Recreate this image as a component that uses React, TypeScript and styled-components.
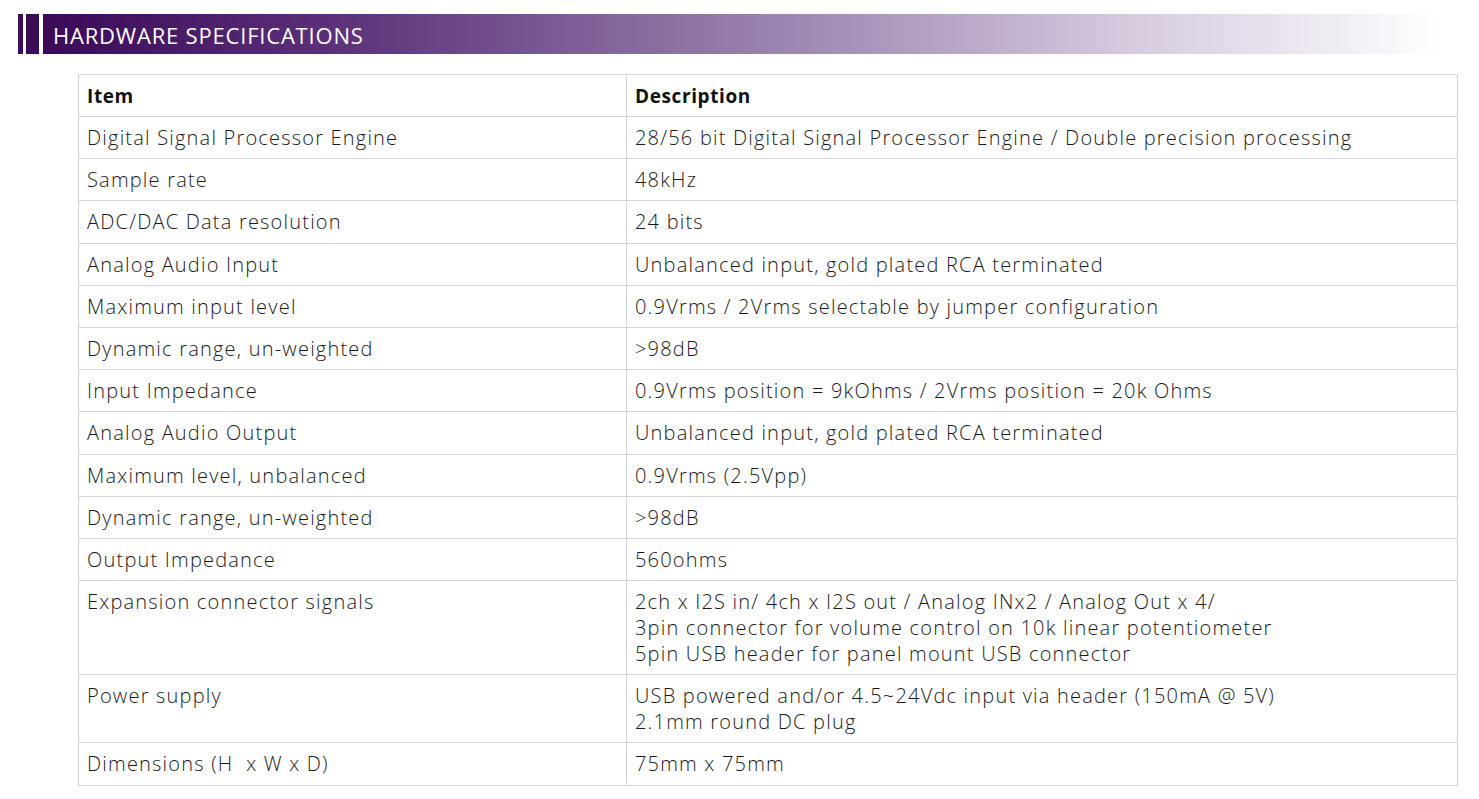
import React from 'react';
import styled, { createGlobalStyle } from 'styled-components';

const GlobalStyle = createGlobalStyle`
  body {
    margin: 0;
    background: #ffffff;
    font-family: "Open Sans", "Liberation Sans", sans-serif;
  }
`;

const Page = styled.div`
  width: 1479px;
  height: 799px;
  padding-top: 14px;
  box-sizing: border-box;
  overflow: hidden;
`;

const Banner = styled.div`
  display: flex;
  align-items: stretch;
  height: 40px;
  margin-left: 18px;
  width: 1422px;
`;

const Stripe = styled.div<{ $w: number; $gap: number }>`
  width: ${p => p.$w}px;
  margin-right: ${p => p.$gap}px;
  background: #3c0c5b;
`;

const Title = styled.div`
  flex: 1;
  display: flex;
  align-items: center;
  padding-left: 10px;
  background: linear-gradient(to right, #3a0a58 0%, #5a2f78 20%, #7d5e95 38%, #ab98bd 60%, #d6cbdf 78%, #efebf3 92%, #ffffff 100%);
  color: #ffffff;
  font-family: "Open Sans", "Liberation Sans", sans-serif;
  font-size: 22px;
  letter-spacing: 0.8px;
  padding-top: 1px;
  box-sizing: border-box;
`;

const Table = styled.table`
  margin: 20px 0 0 78px;
  width: 1380px;
  border-collapse: collapse;
  table-layout: fixed;
`;

const HeadCell = styled.th<{ $w?: number }>`
  width: ${p => (p.$w ? `${p.$w}px` : 'auto')};
  border: 1px solid #d4d4d4;
  padding: 8px 8px 7px 8px;
  height: 26px;
  text-align: left;
  font-weight: bold;
  font-size: 19px;
  letter-spacing: 0.6px;
  color: #111;
  line-height: 26px;
`;

const Cell = styled.td`
  border: 1px solid #d4d4d4;
  padding: 8px 8px 7.2px 8px;
  vertical-align: top;
  font-size: 20px;
  font-weight: 300;
  letter-spacing: 1.2px;
  line-height: 26px;
  color: #1a1a1a;
  white-space: pre-wrap;
`;

const rows: [string, string][] = [
  ['Digital Signal Processor Engine', '28/56 bit Digital Signal Processor Engine / Double precision processing'],
  ['Sample rate', '48kHz'],
  ['ADC/DAC Data resolution', '24 bits'],
  ['Analog Audio Input', 'Unbalanced input, gold plated RCA terminated'],
  ['Maximum input level', '0.9Vrms / 2Vrms selectable by jumper configuration'],
  ['Dynamic range, un-weighted', '>98dB'],
  ['Input Impedance', '0.9Vrms position = 9kOhms / 2Vrms position = 20k Ohms'],
  ['Analog Audio Output', 'Unbalanced input, gold plated RCA terminated'],
  ['Maximum level, unbalanced', '0.9Vrms (2.5Vpp)'],
  ['Dynamic range, un-weighted', '>98dB'],
  ['Output Impedance', '560ohms'],
  [
    'Expansion connector signals',
    '2ch x I2S in/ 4ch x I2S out / Analog INx2 / Analog Out x 4/\n3pin connector for volume control on 10k linear potentiometer\n5pin USB header for panel mount USB connector',
  ],
  ['Power supply', 'USB powered and/or 4.5~24Vdc input via header (150mA @ 5V)\n2.1mm round DC plug'],
  ['Dimensions (H  x W x D)', '75mm x 75mm'],
];

export default function App(): React.ReactElement {
  return (
    <Page>
      <GlobalStyle />
      <Banner>
        <Stripe $w={5} $gap={3} />
        <Stripe $w={13} $gap={4} />
        <Title>HARDWARE SPECIFICATIONS</Title>
      </Banner>
      <Table>
        <thead>
          <tr>
            <HeadCell $w={531}>Item</HeadCell>
            <HeadCell>Description</HeadCell>
          </tr>
        </thead>
        <tbody>
          {rows.map(([item, desc], i) => (
            <tr key={i}>
              <Cell>{item}</Cell>
              <Cell>{desc}</Cell>
            </tr>
          ))}
        </tbody>
      </Table>
    </Page>
  );
}
